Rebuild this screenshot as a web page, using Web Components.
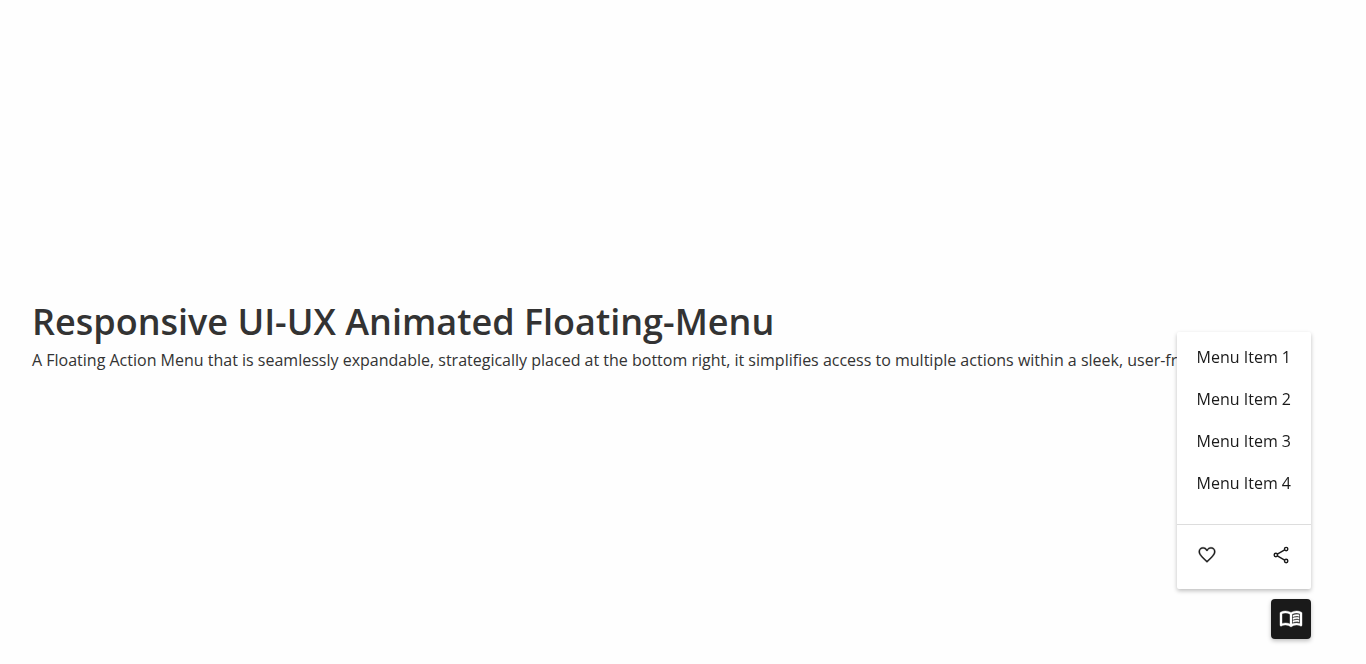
<!DOCTYPE html>
<html lang="en">
<head>
<meta charset="utf-8">
<meta name="viewport" content="width=device-width, initial-scale=1">
<title>Responsive UI-UX Animated Floating-Menu</title>
<style>
  body { margin: 0; background: #fefefe; color: #333; font: 400 16px/22px "Open Sans", sans-serif; }
</style>
</head>
<body>
<floating-page>
  <page-intro>
    <span slot="title">Responsive UI-UX Animated Floating-Menu</span>
    A Floating Action Menu that is seamlessly expandable, strategically placed at the bottom right, it simplifies access to multiple actions within a sleek, user-friendly
  </page-intro>
  <floating-menu slot="overlay">
    <menu-link>Menu Item 1</menu-link>
    <menu-link>Menu Item 2</menu-link>
    <menu-link>Menu Item 3</menu-link>
    <menu-link>Menu Item 4</menu-link>
  </floating-menu>
</floating-page>
<script>
const define = (name, html) => {
  const template = document.createElement('template');
  template.innerHTML = html;
  customElements.define(name, class extends HTMLElement {
    constructor() {
      super();
      this.attachShadow({ mode: 'open' }).append(template.content.cloneNode(true));
    }
  });
};

define('floating-page', `
  <style>
    :host { display: block; }
    main { display: flex; flex-direction: column; justify-content: center; min-height: 100vh; box-sizing: border-box; padding: 4px 32px 0; }
  </style>
  <main><slot></slot></main>
  <slot name="overlay"></slot>`);

define('page-intro', `
  <style>
    :host { display: block; }
    h1 { margin: 0 0 2px; font-size: 36px; line-height: 50px; font-weight: 600; }
    p { margin: 0; }
  </style>
  <h1><slot name="title"></slot></h1>
  <p><slot></slot></p>`);

define('menu-link', `
  <style>
    :host { display: block; }
    a { display: block; padding: 10px 20px; color: #1a1a1a; text-decoration: none; white-space: nowrap; }
    a:hover { background: #f2f2f2; }
  </style>
  <a href="#"><slot></slot></a>`);

define('floating-menu', `
  <style>
    :host { position: fixed; right: 55px; bottom: 25px; display: flex; flex-direction: column; align-items: flex-end; gap: 10px; }
    .panel { background: #fff; border-radius: 2px; box-shadow: 0 2px 4px rgba(0, 0, 0, .25); }
    nav { padding: 4px 0 20px; }
    .actions { display: flex; justify-content: space-between; padding: 20px 20px 24px; border-top: 1px solid #ddd; }
    button { display: flex; align-items: center; justify-content: center; padding: 0; border: 0; background: none; color: #1a1a1a; cursor: pointer; }
    svg { display: block; fill: currentColor; }
    .actions button { height: 20px; }
    .actions svg { width: 20px; height: 20px; }
    .toggle { width: 40px; height: 40px; border-radius: 4px; background: #1a1a1a; color: #fff; box-shadow: 0 2px 4px rgba(0, 0, 0, .25); }
    .toggle svg { width: 24px; height: 24px; }
  </style>
  <div class="panel" id="panel">
    <nav><slot></slot></nav>
    <div class="actions">
      <button type="button" aria-label="Like">
        <svg viewBox="0 -960 960 960" aria-hidden="true"><path stroke="currentColor" stroke-width="16" d="m480-121-41-37q-105.768-97.121-174.884-167.561Q195-396 154-451.5T96.5-552Q80-597 80-643q0-90.155 60.5-150.577Q201-854 290-854q57 0 105.5 27t84.5 78q42-54 89-79.5T670-854q89 0 149.5 60.423Q880-733.155 880-643q0 46-16.5 91T806-451.5Q765-396 695.884-325.561 626.768-255.121 521-158l-41 37Zm0-79q101.236-92.995 166.618-159.498Q712-426 750.5-476t54-89.135q15.5-39.136 15.5-77.72Q820-709 778-751.5T670.225-794q-51.524 0-95.375 31.5Q531-731 504-674h-49q-26-56-69.85-88-43.851-32-95.375-32Q224-794 182-751.5t-42 108.816Q140-604 155.5-564.5t54 90Q248-424 314-358t166 158Z"/></svg>
      </button>
      <button type="button" aria-label="Share">
        <svg viewBox="0 -960 960 960" aria-hidden="true"><g fill="none" stroke="currentColor" stroke-width="70"><circle cx="233" cy="-480" r="80"/><circle cx="727" cy="-193" r="80"/><circle cx="727" cy="-767" r="80"/><path d="m305-522 350-203M305-438l350 203"/></g></svg>
      </button>
    </div>
  </div>
  <button class="toggle" type="button" aria-label="Menu" aria-expanded="true" aria-controls="panel">
    <svg viewBox="0 -960 960 960" aria-hidden="true"><path stroke="currentColor" stroke-width="16" d="M560-564v-68q33-14 67.500-21t72.500-7q26 0 51 4t49 10v64q-24-9-48.500-13.500T700-600q-38 0-73 9.500T560-564Zm0 220v-68q33-14 67.500-21t72.500-7q26 0 51 4t49 10v64q-24-9-48.500-13.500T700-380q-38 0-73 9t-67 27Zm0-110v-68q33-14 67.500-21t72.500-7q26 0 51 4t49 10v64q-24-9-48.500-13.500T700-490q-38 0-73 9.500T560-454ZM260-320q47 0 91.500 10.500T440-278v-394q-41-24-87-36t-93-12q-36 0-71.500 7T120-692v396q35-12 69.500-18t70.500-6Zm260 42q44-21 88.500-31.500T700-320q36 0 70.500 6t69.500 18v-396q-33-14-68.500-21t-71.500-7q-47 0-93 12t-87 36v394Zm-40 118q-48-38-104-59t-116-21q-42 0-82.500 11T100-198q-21 11-40.500-1T40-234v-482q0-11 5.500-21T62-752q46-24 96-36t102-12q58 0 113.500 15T480-740q51-30 106.500-45T700-800q52 0 102 12t96 36q11 5 16.500 15t5.500 21v482q0 23-19.500 35t-40.500 1q-37-20-77.500-31T700-240q-60 0-116 21t-104 59Z"/></svg>
  </button>`);
</script>
</body>
</html>
